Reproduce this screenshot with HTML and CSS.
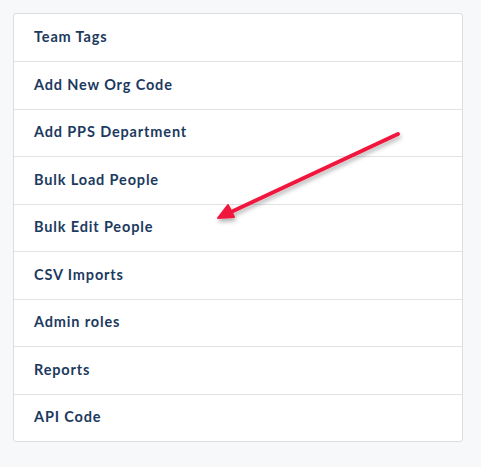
FILE: index.html
```html
<!DOCTYPE html>
<html>
<head>
<meta charset="utf-8">
<link rel="stylesheet" href="styles.css">
</head>
<body>
<div class="page">
  <ul class="menu">
    <li class="item">Team Tags</li>
    <li class="item">Add New Org Code</li>
    <li class="item">Add PPS Department</li>
    <li class="item">Bulk Load People</li>
    <li class="item">Bulk Edit People</li>
    <li class="item">CSV Imports</li>
    <li class="item">Admin roles</li>
    <li class="item">Reports</li>
    <li class="item">API Code</li>
  </ul>
  <svg class="arrow" width="481" height="467" viewBox="0 0 481 467">
    <defs>
      <filter id="sh" x="-20%" y="-20%" width="140%" height="140%">
        <feDropShadow dx="1" dy="3" stdDeviation="2" flood-color="#000" flood-opacity="0.3"/>
      </filter>
    </defs>
    <g filter="url(#sh)">
      <line x1="398" y1="134" x2="231" y2="212" stroke="#f0183d" stroke-width="4" stroke-linecap="round"/>
      <polygon points="218,218 228,205 234,217" fill="#f0183d" stroke="#f0183d" stroke-width="2" stroke-linejoin="round"/>
    </g>
  </svg>
</div>
</body>
</html>
```

FILE: styles.css
```css
html, body {
  margin: 0;
  padding: 0;
  background: #f7f8fa;
}
.page {
  position: relative;
  width: 481px;
  height: 467px;
  padding: 13px 0 0 13px;
  box-sizing: border-box;
}
.menu {
  list-style: none;
  margin: 0;
  padding: 0;
  width: 450px;
  box-sizing: border-box;
  background: #fff;
  border: 1px solid #dcdddf;
  border-radius: 3px;
}
.item {
  box-sizing: border-box;
  height: 47.5px;
  padding: 0 20px 2px;
  display: flex;
  align-items: center;
  border-top: 1px solid #e1e2e4;
  font-family: Lato, "Noto Sans", sans-serif;
  font-weight: 700;
  font-size: 14.5px;
  letter-spacing: 0.85px;
  color: #1c3a5e;
}
.item:first-child {
  border-top: none;
  height: 47px;
}
.arrow {
  position: absolute;
  left: 0;
  top: 0;
  pointer-events: none;
}
```
